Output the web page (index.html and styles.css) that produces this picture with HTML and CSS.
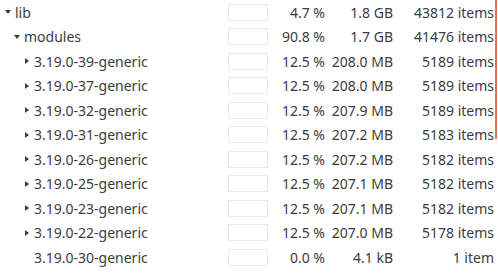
FILE: index.html
```html
<!DOCTYPE html>
<html lang="en">
<head>
    <meta charset="UTF-8">
    <title>Disk Usage</title>
    <link rel="stylesheet" href="styles.css">
</head>
<body>
    <div class="tree">
        <div class="row">
            <div class="name depth-0"><span class="arrow open"></span>lib</div>
            <div class="bar"></div>
            <div class="pct">4.7 %</div>
            <div class="size">1.8 GB</div>
            <div class="count">43812 items</div>
        </div>
        <div class="row">
            <div class="name depth-1"><span class="arrow open"></span>modules</div>
            <div class="bar"></div>
            <div class="pct">90.8 %</div>
            <div class="size">1.7 GB</div>
            <div class="count">41476 items</div>
        </div>
        <div class="row">
            <div class="name depth-2"><span class="arrow closed"></span>3.19.0-39-generic</div>
            <div class="bar"></div>
            <div class="pct">12.5 %</div>
            <div class="size">208.0 MB</div>
            <div class="count">5189 items</div>
        </div>
        <div class="row">
            <div class="name depth-2"><span class="arrow closed"></span>3.19.0-37-generic</div>
            <div class="bar"></div>
            <div class="pct">12.5 %</div>
            <div class="size">208.0 MB</div>
            <div class="count">5189 items</div>
        </div>
        <div class="row">
            <div class="name depth-2"><span class="arrow closed"></span>3.19.0-32-generic</div>
            <div class="bar"></div>
            <div class="pct">12.5 %</div>
            <div class="size">207.9 MB</div>
            <div class="count">5189 items</div>
        </div>
        <div class="row">
            <div class="name depth-2"><span class="arrow closed"></span>3.19.0-31-generic</div>
            <div class="bar"></div>
            <div class="pct">12.5 %</div>
            <div class="size">207.2 MB</div>
            <div class="count">5183 items</div>
        </div>
        <div class="row">
            <div class="name depth-2"><span class="arrow closed"></span>3.19.0-26-generic</div>
            <div class="bar"></div>
            <div class="pct">12.5 %</div>
            <div class="size">207.2 MB</div>
            <div class="count">5182 items</div>
        </div>
        <div class="row">
            <div class="name depth-2"><span class="arrow closed"></span>3.19.0-25-generic</div>
            <div class="bar"></div>
            <div class="pct">12.5 %</div>
            <div class="size">207.1 MB</div>
            <div class="count">5182 items</div>
        </div>
        <div class="row">
            <div class="name depth-2"><span class="arrow closed"></span>3.19.0-23-generic</div>
            <div class="bar"></div>
            <div class="pct">12.5 %</div>
            <div class="size">207.1 MB</div>
            <div class="count">5182 items</div>
        </div>
        <div class="row">
            <div class="name depth-2"><span class="arrow closed"></span>3.19.0-22-generic</div>
            <div class="bar"></div>
            <div class="pct">12.5 %</div>
            <div class="size">207.0 MB</div>
            <div class="count">5178 items</div>
        </div>
        <div class="row">
            <div class="name depth-2"><span class="arrow"></span>3.19.0-30-generic</div>
            <div class="bar"></div>
            <div class="pct">0.0 %</div>
            <div class="size">4.1 kB</div>
            <div class="count">1 item</div>
        </div>
    </div>
    <div class="scroll-indicator"></div>
</body>
</html>
```

FILE: styles.css
```css
body {
    margin: 0;
    background-color: #fff;
    font-family: "Noto Sans", sans-serif;
    font-size: 14px;
    color: #3c3c3c;
    overflow: hidden;
}

.tree {
    width: 498px;
}

.row {
    display: flex;
    align-items: center;
    height: 24.5px;
    white-space: nowrap;
}

.name {
    display: flex;
    align-items: center;
    width: 228px;
    box-sizing: border-box;
}

.depth-0 { padding-left: 5px; }
.depth-1 { padding-left: 14px; }
.depth-2 { padding-left: 25px; }

.arrow {
    display: inline-block;
    width: 0;
    height: 0;
    margin-right: 4px;
}

.arrow.open {
    border-left: 3.5px solid transparent;
    border-right: 3.5px solid transparent;
    border-top: 4px solid #3c3c3c;
    margin-right: 4px;
}

.depth-2 .arrow {
    width: 4px;
    margin-right: 5px;
}

.arrow.closed {
    width: 0;
    border-top: 3.5px solid transparent;
    border-bottom: 3.5px solid transparent;
    border-left: 4px solid #3c3c3c;
}

.bar {
    width: 40px;
    height: 17px;
    box-sizing: border-box;
    border: 1px solid #ececec;
    background-color: #fff;
}

.pct {
    width: 57px;
    text-align: right;
}

.size {
    width: 68px;
    text-align: right;
}

.count {
    width: 101px;
    text-align: right;
}

.scroll-indicator {
    position: absolute;
    top: 0;
    right: 1px;
    width: 2px;
    height: 139px;
    background-color: #ef7347;
}
```
